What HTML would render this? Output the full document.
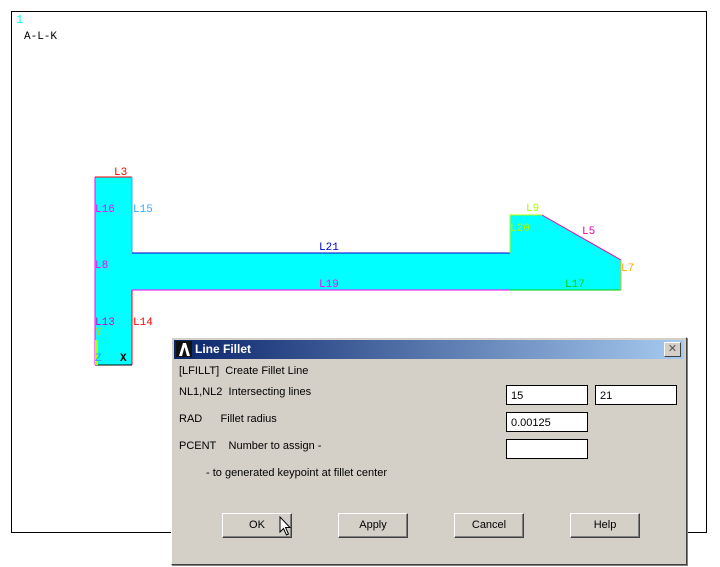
<!DOCTYPE html>
<html><head><style>
body{margin:0;width:720px;height:567px;background:#fff;position:relative;overflow:hidden;font-family:"Liberation Sans",sans-serif}
svg{position:absolute;left:0;top:0}
.dlg{position:absolute;left:171px;top:337px;width:514px;height:226px;background:#d4d0c8;border:1px solid #fff;border-right-color:#404040;border-bottom-color:#404040;box-shadow:1px 1px 0 #808080}
.title{position:absolute;left:2px;top:2px;right:2px;height:19px;background:linear-gradient(to right,#0a246a,#a6caf0);color:#fff;font-weight:bold;font-size:12px;line-height:19px}
.t{position:absolute;font-size:11px;color:#000;white-space:nowrap}
.in{position:absolute;background:#fff;border:1px solid #000;height:20px;width:82px;font-size:11px;line-height:20px;box-sizing:border-box;padding-left:4px}
.btn{position:absolute;top:175px;width:70px;height:25px;box-sizing:border-box;border:1px solid #fff;border-right-color:#404040;border-bottom-color:#404040;font-size:11px;text-align:center;line-height:23px;box-shadow:inset -1px -1px 0 #808080}
</style></head><body>
<svg width="720" height="567" font-family="Liberation Mono,monospace" font-size="11">
<rect x="11.5" y="11.5" width="695" height="521" fill="none" stroke="#000"/>
<text x="16" y="23" fill="#0ff" font-size="12">1</text>
<text x="24" y="39" fill="#000">A-L-K</text>
<polygon points="95,177 132,177 132,253 510,253 510,215 542,215 621,260 621,290 132,290 132,365 95,365" fill="#0ff"/>
<line x1="95" y1="177" x2="132" y2="177" stroke="#f00"/>
<line x1="95" y1="177" x2="95" y2="365" stroke="#f0f"/>
<line x1="132" y1="177" x2="132" y2="253" stroke="#3af"/>
<line x1="132" y1="253" x2="510" y2="253" stroke="#00c"/>
<line x1="132" y1="290" x2="510" y2="290" stroke="#f0f"/>
<line x1="510" y1="290" x2="621" y2="290" stroke="#0c0"/>
<line x1="132" y1="290" x2="132" y2="365" stroke="#f00"/>
<line x1="510" y1="215" x2="542" y2="215" stroke="#af0"/>
<line x1="510" y1="215" x2="510" y2="253" stroke="#af0"/>
<line x1="542" y1="215" x2="621" y2="260" stroke="#e0a"/>
<line x1="621" y1="260" x2="621" y2="290" stroke="#fa0"/>
<line x1="95" y1="365" x2="132" y2="365" stroke="#000"/>
<rect x="95" y="340" width="3" height="25" fill="#af0"/>
<text x="114" y="175" fill="#f00">L3</text>
<text x="95" y="212" fill="#f0f">L16</text>
<text x="133" y="212" fill="#3af">L15</text>
<text x="319" y="250" fill="#00c">L21</text>
<text x="95" y="268" fill="#f0f">L8</text>
<text x="319" y="287" fill="#f0f">L19</text>
<text x="565" y="287" fill="#0c0">L17</text>
<text x="526" y="211" fill="#af0">L9</text>
<text x="510" y="231" fill="#af0">L20</text>
<text x="582" y="234" fill="#e0a">L5</text>
<text x="621" y="271" fill="#fa0">L7</text>
<text x="95" y="325" fill="#c0c">L13</text>
<text x="133" y="325" fill="#f00">L14</text>
<text x="95" y="335" fill="#cc0">Y</text>
<text x="95" y="361" fill="#39f">Z</text>
<text x="120" y="361" fill="#000" font-weight="bold">X</text>
</svg>
<div class="dlg">
<div class="title"><span style="display:inline-block;width:16px;height:16px;background:#fff;margin:1px 3px 0 2px;vertical-align:top;position:relative"><svg width="16" height="16"><rect width="16" height="16" fill="#111"/><path d="M3 15 L7 2 L10 2 L14 15 L11 15 L8.5 6 L6 15Z" fill="#fff"/></svg></span>Line Fillet
<span style="position:absolute;right:3px;top:2px;width:15px;height:13px;background:#d4d0c8;border:1px solid #fff;border-right-color:#404040;border-bottom-color:#404040;color:#555;font-size:11px;line-height:13px;text-align:center;font-weight:normal">✕</span></div>
<div class="t" style="left:7px;top:27px">[LFILLT]&nbsp; Create Fillet Line</div>
<div class="t" style="left:7px;top:48px">NL1,NL2&nbsp; Intersecting lines</div>
<div class="t" style="left:7px;top:75px">RAD&nbsp;&nbsp;&nbsp;&nbsp;&nbsp; Fillet radius</div>
<div class="t" style="left:7px;top:102px">PCENT&nbsp;&nbsp;&nbsp; Number to assign -</div>
<div class="t" style="left:34px;top:129px">- to generated keypoint at fillet center</div>
<div class="in" style="left:334px;top:47px">15</div>
<div class="in" style="left:423px;top:47px">21</div>
<div class="in" style="left:334px;top:74px">0.00125</div>
<div class="in" style="left:334px;top:101px"></div>
<div class="btn" style="left:50px">OK</div>
<div class="btn" style="left:166px">Apply</div>
<div class="btn" style="left:282px">Cancel</div>
<div class="btn" style="left:398px">Help</div>
<svg style="left:107px;top:178px" width="14" height="22"><path d="M1 1 L1 16 L4.5 12.5 L7.5 19 L9.5 18 L6.5 11.5 L11 11.5 Z" fill="#fff" stroke="#000"/></svg>
</div>
</body></html>
